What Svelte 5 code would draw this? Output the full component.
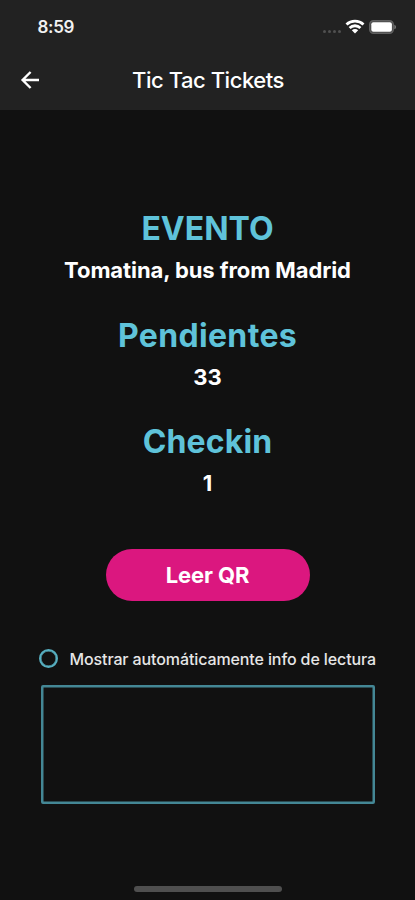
<script>
  const stats = [
    { label: 'EVENTO', value: 'Tomatina, bus from Madrid', kind: 'event' },
    { label: 'Pendientes', value: '33', kind: 'pending' },
    { label: 'Checkin', value: '1', kind: 'checkin' }
  ];
  let auto = $state(false);
</script>

<div class="screen">
  <header>
    <div class="status">
      <span class="time">8:59</span>
      <div class="indicators">
        <div class="dots"><i></i><i></i><i></i><i></i></div>
        <svg class="wifi" width="20" height="16" viewBox="0 0 20 16" fill="none" stroke="#fff" stroke-width="2.8">
          <path d="M1.5 5.4C6.2 .9 13.8 .9 18.5 5.4" />
          <path d="M4.6 8.9C7.6 6 12.4 6 15.4 8.9" />
          <path d="M10 14.4 6.8 11.3C8.6 9.6 11.4 9.6 13.2 11.3Z" fill="#fff" stroke="none" />
        </svg>
        <svg class="battery" width="28" height="14" viewBox="0 0 28 14">
          <rect x=".7" y=".7" width="23.6" height="12.6" rx="3.8" fill="#444" stroke="#606060" stroke-width="1.4" />
          <rect x="2.3" y="2.3" width="20.6" height="9.4" rx="2" fill="#fff" />
          <path d="M25.3 4.7C27.6 5.3 27.6 8.7 25.3 9.3Z" fill="#777" />
        </svg>
      </div>
    </div>
    <div class="bar">
      <button class="back" aria-label="Atrás">
        <svg width="20" height="20" viewBox="0 0 20 20" fill="none" stroke="#fff" stroke-width="2.4">
          <path d="M19 10H3M10.6 2 2.6 10l8 8" />
        </svg>
      </button>
      <h1>Tic Tac Tickets</h1>
    </div>
  </header>

  <main>
    {#each stats as s}
      <section class={s.kind}>
        <h2><span>{s.label}</span></h2>
        <p><span>{s.value}</span></p>
      </section>
    {/each}
    <button class="scan"><span>Leer QR</span></button>
    <button class="option" role="switch" aria-checked={auto} onclick={() => (auto = !auto)}>
      <span class="radio" class:on={auto}></span>
      <span class="text">Mostrar automáticamente info de lectura</span>
    </button>
    <div class="info"></div>
  </main>
  <div class="home"></div>
</div>

<style>
  :global(body) {
    margin: 0;
    background: #111;
  }
  .screen {
    box-sizing: border-box;
    height: 900px;
    display: flex;
    flex-direction: column;
    background: #111;
    color: #fff;
    font-family: Inter, 'Liberation Sans', sans-serif;
    white-space: nowrap;
    overflow: hidden;
  }
  button {
    border: 0;
    padding: 0;
    background: none;
    color: inherit;
    font: inherit;
  }
  header {
    height: 110px;
    background: #222;
    flex: none;
  }
  .status {
    height: 54px;
    display: flex;
    align-items: center;
    justify-content: space-between;
    padding: 0 18px 0 37.5px;
    box-sizing: border-box;
  }
  .time {
    font-size: 17px;
    font-weight: 600;
    letter-spacing: -0.3px;
    color: #f2f2f2;
  }
  .indicators {
    display: flex;
    align-items: center;
  }
  .dots {
    display: flex;
    gap: 2px;
    margin: 9px 4px 0 0;
  }
  .dots i {
    width: 3px;
    height: 3px;
    border-radius: 50%;
    background: #505050;
  }
  .wifi {
    margin-right: 4px;
  }
  .bar {
    height: 52px;
    display: grid;
    grid-template-columns: 60px 1fr 59px;
    align-items: center;
  }
  .back {
    display: flex;
    padding-left: 20px;
  }
  h1 {
    margin: 0;
    font-size: 22px;
    font-weight: 500;
    letter-spacing: -0.45px;
    text-align: center;
  }
  main {
    flex: 1;
    display: flex;
    flex-direction: column;
    align-items: center;
    padding-top: 98px;
  }
  section {
    height: 106.5px;
    text-align: center;
  }
  h2 {
    margin: 0;
    font-size: 32px;
    line-height: 42px;
    font-weight: 700;
    color: #5fc3da;
  }
  .pending h2 {
    letter-spacing: 0.35px;
  }
  .checkin h2 {
    letter-spacing: 0.15px;
  }
  p {
    margin: 0;
    font-size: 22px;
    line-height: 40px;
    font-weight: 700;
    letter-spacing: -0.08px;
  }
  .scan {
    flex: none;
    width: 204px;
    height: 52px;
    margin-top: 21px;
    border-radius: 26px;
    background: #db177f;
    font-size: 22px;
    font-weight: 700;
    letter-spacing: -0.1px;
  }
  .option {
    display: flex;
    align-items: center;
    gap: 11.5px;
    height: 24px;
    width: 337px;
    margin-top: 46px;
    font-size: 16px;
    font-weight: 500;
    letter-spacing: -0.11px;
    color: #e6e6e6;
  }
  .radio {
    box-sizing: border-box;
    flex: none;
    width: 19px;
    height: 19px;
    border: 2px solid #57afc0;
    border-radius: 50%;
    box-shadow: inset 0 0 0 0.5px #57afc0;
  }
  .radio.on {
    background: #57afc0;
  }
  .info {
    box-sizing: border-box;
    width: 334px;
    height: 119px;
    margin-top: 14px;
    border: 2px solid #448795;
    border-radius: 2px;
    box-shadow: inset 0 0 0 0.5px #448795;
  }
  .home {
    flex: none;
    align-self: center;
    width: 148px;
    height: 6px;
    margin-bottom: 8px;
    border-radius: 3px;
    background: #4f4f4f;
  }
</style>
